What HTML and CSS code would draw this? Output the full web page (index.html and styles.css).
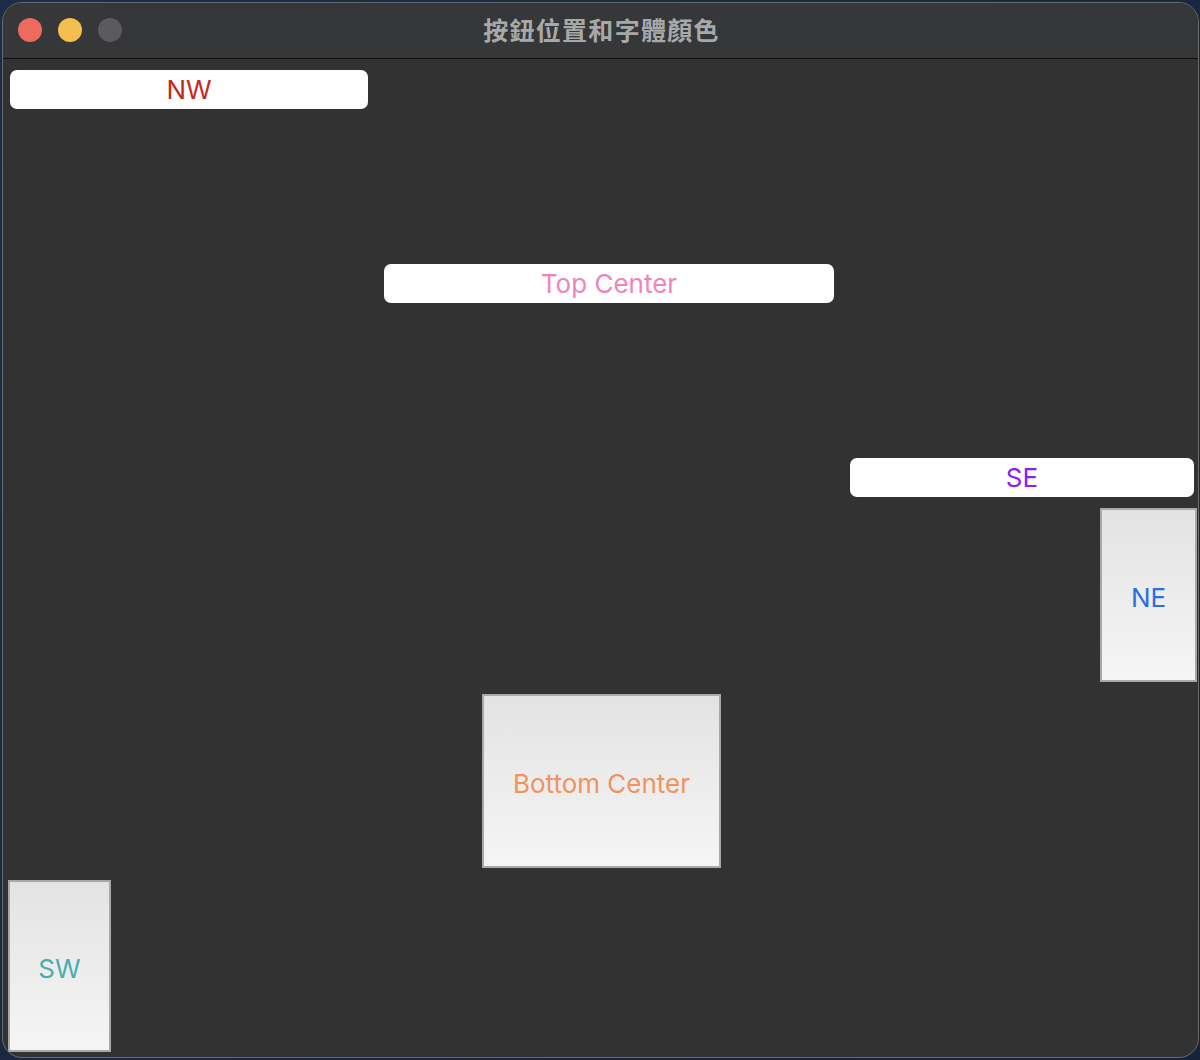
FILE: index.html
```html
<!DOCTYPE html>
<html lang="zh-Hant">
<head>
<meta charset="utf-8">
<title>按鈕位置和字體顏色</title>
<link rel="stylesheet" href="styles.css">
</head>
<body>
<div class="window">
  <header class="titlebar">
    <div class="lights">
      <span class="light red"></span>
      <span class="light yellow"></span>
      <span class="light gray"></span>
    </div>
    <h1 class="title">按鈕位置和字體顏色</h1>
  </header>
  <main class="content">
    <button class="btn flat nw">NW</button>
    <button class="btn flat tc">Top Center</button>
    <button class="btn flat se">SE</button>
    <button class="btn box ne">NE</button>
    <button class="btn box bc">Bottom Center</button>
    <button class="btn box sw">SW</button>
  </main>
</div>
</body>
</html>
```

FILE: styles.css
```css
html, body {
  margin: 0;
  padding: 0;
}
body {
  width: 1200px;
  height: 1060px;
  background: linear-gradient(135deg, #1d2c47 0%, #172338 100%);
  overflow: hidden;
  font-family: Inter, "Noto Sans", "Liberation Sans", sans-serif;
}
.window {
  box-sizing: border-box;
  margin: 2px 0 0 2px;
  width: 1197px;
  height: 1056px;
  border: 1px solid #6a6a6c;
  border-radius: 20px;
  background: #323232;
  overflow: hidden;
  display: flex;
  flex-direction: column;
}
.titlebar {
  position: relative;
  height: 55px;
  flex: none;
  background: #363739;
  border-bottom: 1px solid #111111;
  display: flex;
  align-items: center;
  justify-content: center;
}
.lights {
  position: absolute;
  left: 15px;
  top: 15px;
  display: flex;
  gap: 16px;
}
.light {
  width: 24px;
  height: 24px;
  border-radius: 50%;
}
.red { background: #ee6a5f; }
.yellow { background: #f5bf4f; }
.gray { background: #5b5b5d; }
.title {
  margin: 0 0 4px 0;
  font-family: "Noto Sans CJK TC", "Noto Sans CJK SC", sans-serif;
  font-size: 25px;
  font-weight: 700;
  color: #a8a8a8;
  letter-spacing: 1.3px;
  transform: translateX(1px);
}
.content {
  flex: 1;
  display: flex;
  flex-direction: column;
  align-items: flex-start;
}
.btn {
  box-sizing: border-box;
  font-family: Inter, "Noto Sans", "Liberation Sans", sans-serif;
  font-size: 26px;
  font-weight: 400;
  display: flex;
  align-items: center;
  justify-content: center;
  padding: 0;
  cursor: default;
}
.flat {
  height: 39px;
  background: #ffffff;
  border: none;
  border-radius: 7px;
}
.box {
  background: linear-gradient(180deg, #e3e3e3 0%, #f5f5f5 100%);
  border: 2px solid #a8a8a8;
  border-radius: 0;
  padding-top: 4px;
}
.nw {
  margin: 11px 0 0 7px;
  width: 358px;
  color: #c4291f;
}
.tc {
  margin: 155px 0 0 381px;
  width: 450px;
  color: #f183bb;
}
.se {
  margin: 155px 0 0 847px;
  width: 344px;
  color: #8b1ff6;
}
.ne {
  margin: 11px 0 0 1097px;
  width: 97px;
  height: 174px;
  color: #2f6ee0;
}
.bc {
  margin: 12px 0 0 479px;
  width: 239px;
  height: 174px;
  color: #f1935c;
}
.sw {
  margin: 12px 0 0 5px;
  width: 103px;
  height: 172px;
  color: #4aaeae;
}
```
